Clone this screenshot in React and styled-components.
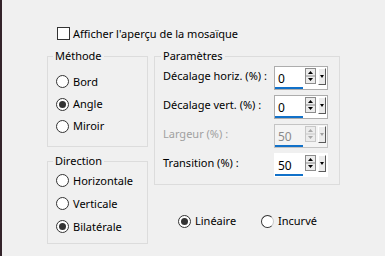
import React from "react";
import styled, { createGlobalStyle } from "styled-components";

const Global = createGlobalStyle`
  html, body { margin: 0; padding: 0; background: #f0f0f0; }
  body {
    font-family: "Noto Sans", "Open Sans", sans-serif;
    font-size: 11px;
    color: #000;
  }
  #root { width: 385px; height: 256px; }
`;

const Window = styled.div`
  width: 385px;
  height: 256px;
  display: flex;
  background: #f0f0f0;
  overflow: hidden;
`;

const Edge = styled.div`
  width: 2px;
  flex: none;
  background: #33232a;
`;

const Content = styled.div`
  flex: 1;
  padding: 27px 0 0 45px;
  display: flex;
  flex-direction: column;
`;

const CheckRow = styled.label`
  display: flex;
  align-items: center;
  gap: 3px;
  height: 13px;
  padding-left: 10px;
  line-height: 16px;
`;

const CheckBox = styled.span`
  width: 13px;
  height: 13px;
  box-sizing: border-box;
  border: 1px solid #333;
  background: #fff;
  flex: none;
`;

const Columns = styled.div`
  display: flex;
  gap: 6px;
  margin-top: 8px;
  align-items: flex-start;
`;

const Column = styled.div`
  display: flex;
  flex-direction: column;
  gap: ${(p) => p.$gap || 0}px;
`;

const Group = styled.fieldset`
  margin: 0;
  padding: 0;
  min-width: 0;
  box-sizing: border-box;
  width: ${(p) => p.$w}px;
  height: ${(p) => p.$h}px;
  border: 1px solid #dcdcdc;
  display: flex;
  flex-direction: column;
`;

const Legend = styled.legend`
  padding: 0 2px;
  margin-left: ${(p) => p.$ml}px;
  line-height: 16px;
  font-size: 11px;
`;

const RadioList = styled.div`
  display: flex;
  flex-direction: column;
  padding: ${(p) => p.$top}px 0 0 8px;
`;

const RadioItem = styled.label`
  display: flex;
  align-items: center;
  gap: 4px;
  height: ${(p) => p.$h || 22}px;
  min-width: ${(p) => p.$minw || 0}px;
  box-sizing: border-box;
  line-height: 16px;
`;

const Circle = styled.span`
  width: 13px;
  height: 13px;
  box-sizing: border-box;
  border-radius: 50%;
  border: 1px solid #333;
  border-right-color: ${(p) => (p.$faded ? "#c8c8c8" : "#333")};
  background: #fff;
  flex: none;
  display: flex;
  align-items: center;
  justify-content: center;
  &::after {
    content: "";
    display: ${(p) => (p.$on ? "block" : "none")};
    width: 7px;
    height: 7px;
    border-radius: 50%;
    background: #333;
  }
`;

const ParamRows = styled.div`
  display: flex;
  flex-direction: column;
  gap: 5px;
  padding: 2px 0 0 8px;
`;

const ParamRow = styled.div`
  display: grid;
  grid-template-columns: 111px 54px;
  align-items: start;
`;

const ParamLabel = styled.span`
  line-height: 16px;
  margin-top: 2px;
  color: ${(p) => (p.$disabled ? "#a0a0a0" : "#000")};
  white-space: nowrap;
`;

const SpinBox = styled.div`
  width: 54px;
  height: 24px;
  box-sizing: border-box;
  border: 1px solid ${(p) => (p.$plain ? "#fff" : p.$disabled ? "#c4c4c4" : "#adadad")};
  background: ${(p) => (p.$disabled ? "#f4f4f4" : "#fff")};
  display: flex;
  align-items: flex-start;
`;

const Field = styled.div`
  width: 28px;
  height: 22px;
  display: flex;
  flex-direction: column;
  color: ${(p) => (p.$disabled ? "#8a8a8a" : "#000")};
`;

const FieldText = styled.span`
  padding: 4px 0 0 3px;
  line-height: 16px;
  font-size: 12px;
`;

const Underline = styled.span`
  margin-top: auto;
  height: 2px;
  background: #1171c9;
`;

const SpinArrows = styled.svg`
  margin: 1px 0 0 2px;
  flex: none;
`;

const DropButton = styled.span`
  margin: 1px 0 0 2px;
  width: 8px;
  height: 17px;
  box-sizing: border-box;
  border-top: 1px solid #fff;
  border-left: 1px solid #fff;
  border-right: 1px solid #5a5a5a;
  border-bottom: 1px solid #5a5a5a;
  background: #ececec;
  display: flex;
  align-items: center;
  justify-content: center;
  flex: none;
  &::after {
    content: "";
    width: 0;
    height: 0;
    border-left: 2.5px solid transparent;
    border-right: 2.5px solid transparent;
    border-top: 3px solid ${(p) => (p.$disabled ? "#a0a0a0" : "#000")};
  }
`;

const BottomRow = styled.div`
  display: flex;
  padding-left: 24px;
  margin-top: 28px;
`;

function Spinner({ value, disabled, plain }) {
  const c = disabled ? "#a8a8a8" : "#000";
  const b = disabled ? "#c8c8c8" : "#8c8c8c";
  return (
    <SpinBox $disabled={disabled} $plain={plain}>
      <Field $disabled={disabled}>
        <FieldText>{value}</FieldText>
        <Underline />
      </Field>
      <SpinArrows width="11" height="16" viewBox="0 0 11 16">
        <rect x="0.5" y="0.5" width="10" height="15" fill="#ececec" stroke={b} />
        <line x1="1" y1="8" x2="10" y2="8" stroke={b} />
        <polygon points="3,6 8,6 5.5,3" fill={c} />
        <polygon points="3,10 8,10 5.5,13" fill={c} />
      </SpinArrows>
      <DropButton $disabled={disabled} />
    </SpinBox>
  );
}

function Radio({ label, on, faded, h, minw }) {
  return (
    <RadioItem $h={h} $minw={minw}>
      <Circle $on={on} $faded={faded} />
      <span>{label}</span>
    </RadioItem>
  );
}

export default function App() {
  return (
    <>
      <Global />
      <Window>
        <Edge />
        <Content>
          <CheckRow>
            <CheckBox />
            <span>Afficher l'aperçu de la mosaïque</span>
          </CheckRow>
          <Columns>
            <Column $gap={6}>
              <Group $w={101} $h={99}>
                <Legend $ml={5}>Méthode</Legend>
                <RadioList $top={6}>
                  <Radio label="Bord" h={23} />
                  <Radio label="Angle" on />
                  <Radio label="Miroir" />
                </RadioList>
              </Group>
              <Group $w={101} $h={91}>
                <Legend $ml={5}>Direction</Legend>
                <RadioList $top={0}>
                  <Radio label="Horizontale" h={23} />
                  <Radio label="Verticale" h={23} />
                  <Radio label="Bilatérale" on h={23} />
                </RadioList>
              </Group>
            </Column>
            <Column>
              <Group $w={186} $h={137}>
                <Legend $ml={6}>Paramètres</Legend>
                <ParamRows>
                  <ParamRow>
                    <ParamLabel>Décalage horiz. (%) :</ParamLabel>
                    <Spinner value="0" />
                  </ParamRow>
                  <ParamRow>
                    <ParamLabel>Décalage vert. (%) :</ParamLabel>
                    <Spinner value="0" />
                  </ParamRow>
                  <ParamRow>
                    <ParamLabel $disabled>Largeur (%) :</ParamLabel>
                    <Spinner value="50" disabled />
                  </ParamRow>
                  <ParamRow>
                    <ParamLabel>Transition (%) :</ParamLabel>
                    <Spinner value="50" plain />
                  </ParamRow>
                </ParamRows>
              </Group>
              <BottomRow>
                <Radio label="Linéaire" on h={16} minw={83} />
                <Radio label="Incurvé" faded h={16} />
              </BottomRow>
            </Column>
          </Columns>
        </Content>
      </Window>
    </>
  );
}
